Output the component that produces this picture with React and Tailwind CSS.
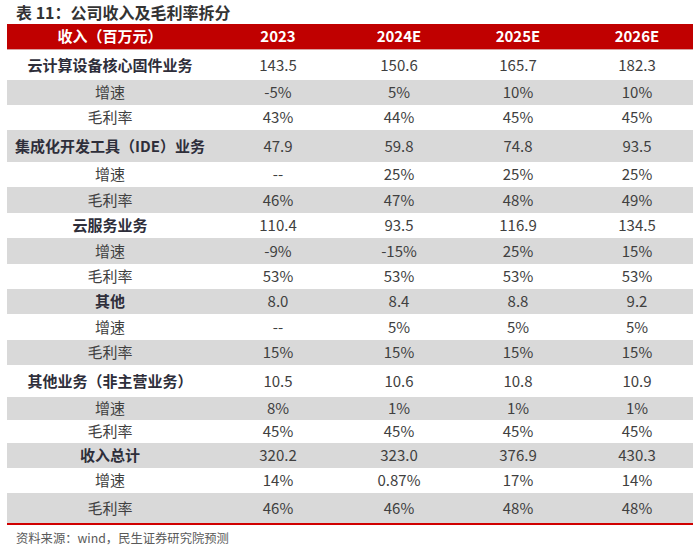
import React from 'react';

const FONT = { fontFamily: '"Noto Sans CJK SC", "Noto Sans", sans-serif' };

const ROWS = [
  { label: '云计算设备核心固件业务', bold: true, h: 'h-[30px]', v: ['143.5', '150.6', '165.7', '182.3'] },
  { label: '增速', h: 'h-[25px]', v: ['-5%', '5%', '10%', '10%'] },
  { label: '毛利率', h: 'h-[25px]', v: ['43%', '44%', '45%', '45%'] },
  { label: '集成化开发工具（IDE）业务', bold: true, h: 'h-[32px]', v: ['47.9', '59.8', '74.8', '93.5'] },
  { label: '增速', h: 'h-[25px]', v: ['--', '25%', '25%', '25%'] },
  { label: '毛利率', h: 'h-[26px]', v: ['46%', '47%', '48%', '49%'] },
  { label: '云服务业务', bold: true, h: 'h-[25px]', v: ['110.4', '93.5', '116.9', '134.5'] },
  { label: '增速', h: 'h-[26px]', v: ['-9%', '-15%', '25%', '15%'] },
  { label: '毛利率', h: 'h-[25px]', v: ['53%', '53%', '53%', '53%'] },
  { label: '其他', bold: true, h: 'h-[25px]', v: ['8.0', '8.4', '8.8', '9.2'] },
  { label: '增速', h: 'h-[26px]', v: ['--', '5%', '5%', '5%'] },
  { label: '毛利率', h: 'h-[25px]', v: ['15%', '15%', '15%', '15%'] },
  { label: '其他业务（非主营业务）', bold: true, h: 'h-[32px]', v: ['10.5', '10.6', '10.8', '10.9'] },
  { label: '增速', h: 'h-[23px]', v: ['8%', '1%', '1%', '1%'] },
  { label: '毛利率', h: 'h-[23px]', v: ['45%', '45%', '45%', '45%'] },
  { label: '收入总计', bold: true, h: 'h-[25px]', v: ['320.2', '323.0', '376.9', '430.3'] },
  { label: '增速', h: 'h-[25px]', v: ['14%', '0.87%', '17%', '14%'] },
  { label: '毛利率', h: 'h-[30px]', v: ['46%', '46%', '48%', '48%'] },
];

const GRID = 'grid grid-cols-[206px_130px_112px_126px_112px]';

export default function App() {
  return (
    <div className="w-[700px] h-[549px] bg-white overflow-hidden" style={FONT}>
      {/* Title */}
      <div className="h-[24px] pl-[16px] pt-[1px] text-[16px] font-bold text-[#333333] leading-[22px]">
        表 11：公司收入及毛利率拆分
      </div>

      <div className="ml-[7px] w-[686px]">
        {/* Header */}
        <div className={`${GRID} h-[26px] bg-[#c00000] border-b border-[#d9a0a0] text-white text-[15px] font-bold items-center`}>
          <div className="text-center">收入（百万元）</div>
          <div className="text-center">2023</div>
          <div className="text-center">2024E</div>
          <div className="text-center">2025E</div>
          <div className="text-center">2026E</div>
        </div>

        {ROWS.map((r, i) => (
          <div
            key={i}
            className={`${GRID} ${r.h} items-center text-[15px] ${i % 2 === 1 ? 'bg-[#d9d9d9]' : 'bg-white'}`}
          >
            <div className={`text-center ${r.bold ? 'font-bold text-[#2e2e3a]' : 'text-[#404040]'}`}>{r.label}</div>
            {r.v.map((x, j) => (
              <div key={j} className="text-center text-[#404040]">{x}</div>
            ))}
          </div>
        ))}
        <div className="h-[2px] bg-[#d00000]" />
      </div>

      {/* Source */}
      <div className="pl-[16px] pt-[3px] text-[12.3px] text-[#595959] leading-[20px]">
        资料来源：wind，民生证券研究院预测
      </div>
    </div>
  );
}
